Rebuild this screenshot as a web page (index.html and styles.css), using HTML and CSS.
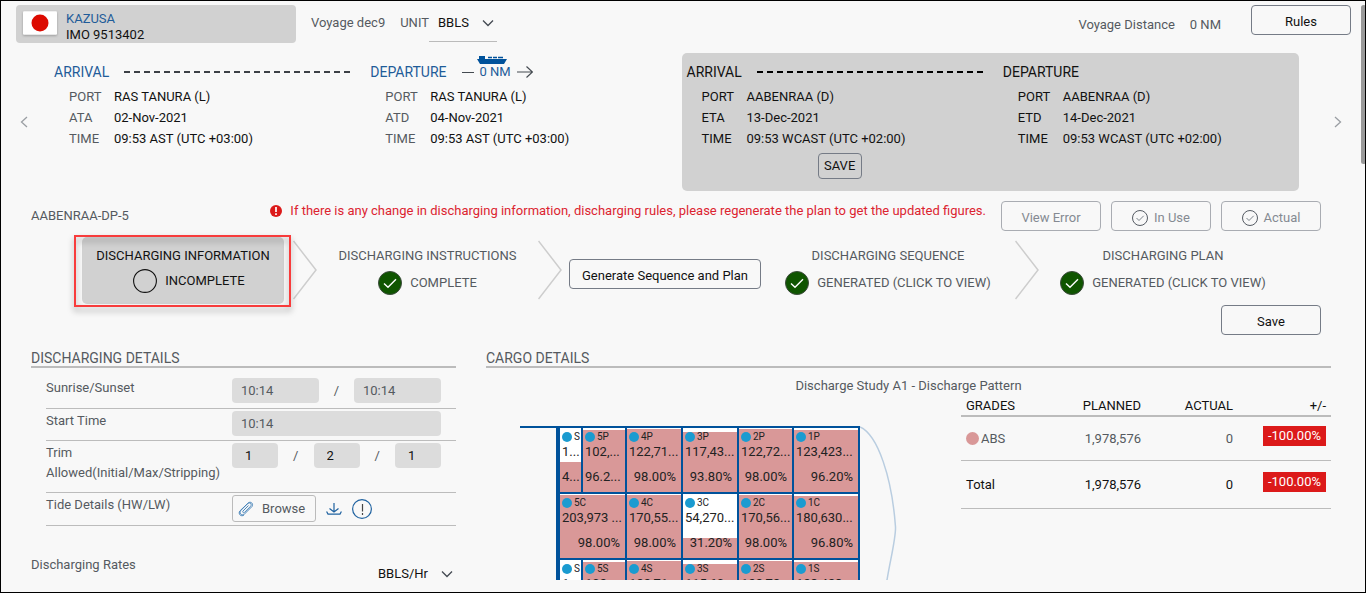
FILE: index.html
```html
<!DOCTYPE html>
<html lang="en">
<head>
<meta charset="utf-8">
<title>Discharging Information</title>
<link rel="stylesheet" href="styles.css">
</head>
<body>
<svg class="defs" aria-hidden="true">
  <symbol id="down" viewBox="0 0 12 8"><path d="M1 1.5l5 5 5-5" fill="none" stroke="#444a52" stroke-width="1.3"/></symbol>
  <symbol id="chevron" viewBox="0 0 24 60"><path d="M0.5 1L23 30 0.5 59" fill="none" stroke="#cdcdcd" stroke-width="1.5"/></symbol>
  <symbol id="done" viewBox="0 0 24 24"><circle cx="12" cy="12" r="11.5" fill="#0f5500" stroke="#3c4a3c"/><path d="M6 12.5l4 3.8 8-8" fill="none" stroke="#fff" stroke-width="1.4"/></symbol>
  <symbol id="tick" viewBox="0 0 16 16"><circle cx="8" cy="8" r="7.5" fill="none" stroke="#555b63"/><path d="M4.5 8l2.5 2.5 4.700-4.700" fill="none" stroke="#6c757d" stroke-width="0.9"/></symbol>
</svg>
<div class="page">
<div class="content">
  <header class="top">
    <div class="vessel">
      <svg class="flag" viewBox="0 0 32 22" aria-label="Japan"><rect width="32" height="22" rx="1" fill="#fff"/><circle cx="16" cy="11" r="8" fill="#dc0a00"/></svg>
      <div><a class="vessel-name" href="#">KAZUSA</a><div>IMO 9513402</div></div>
    </div>
    <span>Voyage dec9</span>
    <div class="unit"><label for="unit">UNIT</label>
      <span class="select unit-select"><select id="unit"><option>BBLS</option></select><svg><use href="#down"/></svg></span>
    </div>
    <div class="distance"><span>Voyage Distance</span><span>0 NM</span></div>
    <button class="btn">Rules</button>
  </header>

  <section class="ports">
    <button class="nav" aria-label="Previous"><svg viewBox="0 0 8 12"><path d="M7 1L1.500 6 7 11" fill="none" stroke="#9a9ea3" stroke-width="1.300"/></svg></button>
    <article class="port">
      <div class="leg">
        <div class="leg-head"><h3>ARRIVAL</h3><span class="dashes"></span></div>
        <dl><dt>PORT</dt><dd>RAS TANURA (L)</dd><dt>ATA</dt><dd>02-Nov-2021</dd><dt>TIME</dt><dd>09:53 AST (UTC +03:00)</dd></dl>
      </div>
      <div class="leg">
        <div class="leg-head"><h3>DEPARTURE</h3>
          <div class="sail"><span class="line"></span>
            <span class="nm">0 NM<svg class="ship" viewBox="0 0 30 8"><path d="M2 0h6v3h22l-3 5H3L0 3h2z" fill="#00529b"/><path d="M11 1.500h4M16 1.500h4M21 1.500h5" stroke="#00529b" stroke-width="1.500"/></svg></span>
            <svg class="arrow" viewBox="0 0 16 12"><path d="M0 6h15M9.500 0.500l6 5.500-6 5.500" fill="none" stroke="#444a50" stroke-width="1.200"/></svg>
          </div></div>
        <dl><dt>PORT</dt><dd>RAS TANURA (L)</dd><dt>ATD</dt><dd>04-Nov-2021</dd><dt>TIME</dt><dd>09:53 AST (UTC +03:00)</dd></dl>
      </div>
    </article>
    <article class="port current">
      <div class="leg">
        <div class="leg-head"><h3>ARRIVAL</h3><span class="dashes"></span></div>
        <dl><dt>PORT</dt><dd>AABENRAA (D)</dd><dt>ETA</dt><dd>13-Dec-2021</dd><dt>TIME</dt><dd>09:53 WCAST (UTC +02:00)</dd></dl>
        <div class="save-port"><button class="btn-small">SAVE</button></div>
      </div>
      <div class="leg">
        <div class="leg-head"><h3>DEPARTURE</h3></div>
        <dl><dt>PORT</dt><dd>AABENRAA (D)</dd><dt>ETD</dt><dd>14-Dec-2021</dd><dt>TIME</dt><dd>09:53 WCAST (UTC +02:00)</dd></dl>
      </div>
    </article>
    <button class="nav" aria-label="Next"><svg viewBox="0 0 8 12"><path d="M1 1l5.500 5L1 11" fill="none" stroke="#9a9ea3" stroke-width="1.300"/></svg></button>
  </section>

  <section class="plan-bar">
    <span class="plan-name">AABENRAA-DP-5</span>
    <p class="warning"><svg viewBox="0 0 12 12"><circle cx="6" cy="6" r="6" fill="#dc1a1a"/><path d="M6 2v5M6 8.300v1.700" stroke="#fff" stroke-width="1.700"/></svg>If there is any change in discharging information, discharging rules, please regenerate the plan to get the updated figures.</p>
    <div class="plan-actions">
      <button class="btn muted" disabled>View Error</button>
      <button class="btn muted" disabled><svg><use href="#tick"/></svg>In Use</button>
      <button class="btn muted" disabled><svg><use href="#tick"/></svg>Actual</button>
    </div>
  </section>

  <nav class="steps">
    <a class="step active" href="#"><span>DISCHARGING INFORMATION</span><span class="state"><svg viewBox="0 0 24 24"><circle cx="12" cy="12" r="11.400" fill="none" stroke="#111" stroke-width="1.100"/></svg>INCOMPLETE</span></a>
    <svg class="chev"><use href="#chevron"/></svg>
    <a class="step" href="#"><span>DISCHARGING INSTRUCTIONS</span><span class="state"><svg><use href="#done"/></svg>COMPLETE</span></a>
    <svg class="chev"><use href="#chevron"/></svg>
    <button class="btn generate">Generate Sequence and Plan</button>
    <a class="step" href="#"><span>DISCHARGING SEQUENCE</span><span class="state"><svg><use href="#done"/></svg>GENERATED (CLICK TO VIEW)</span></a>
    <svg class="chev"><use href="#chevron"/></svg>
    <a class="step" href="#"><span>DISCHARGING PLAN</span><span class="state"><svg><use href="#done"/></svg>GENERATED (CLICK TO VIEW)</span></a>
  </nav>
  <div class="save-row"><button class="btn">Save</button></div>

  <main class="panels">
    <section class="details">
      <h2>DISCHARGING DETAILS</h2>
      <div class="fields">
        <div class="field first"><label for="sunrise">Sunrise/Sunset</label><div class="controls"><input class="time" id="sunrise" value="10:14"><span>/</span><input class="time" aria-label="Sunset" value="10:14"></div></div>
        <div class="field"><label for="start">Start Time</label><div class="controls"><input class="time wide" id="start" value="10:14"></div></div>
        <div class="field trim"><label for="trim">Trim Allowed(Initial/Max/Stripping)</label><div class="controls"><input class="num" id="trim" value="1"><span>/</span><input class="num" aria-label="Max trim" value="2"><span>/</span><input class="num" aria-label="Stripping trim" value="1"></div></div>
        <div class="field"><span>Tide Details (HW/LW)</span><div class="files">
          <button class="browse"><svg viewBox="0 0 16 16"><path d="M10.500 4.500L5 10c-1 1 .5 2.400 1.500 1.400l6-6.100c2-2-.8-4.600-2.800-2.700L3 9.300c-2.600 2.600 1 6.200 3.600 3.600L14 5.500M14 5.500c1.800-2.500-1-5.700-3.800-3.500L2 9.800c-2.500 3 1.200 6.500 4 4.200" fill="none" stroke="#4a86bb" stroke-width="1"/></svg>Browse</button>
          <button class="icon" aria-label="Download"><svg viewBox="0 0 16 12"><path d="M8 0v9M3.500 5.500L8 9l4.500-3.500M.6 8.500l1.400 2.600h12l1.400-2.600" fill="none" stroke="#1f62a0" stroke-width="1.200"/></svg></button>
          <button class="icon info" aria-label="Information"><svg viewBox="0 0 20 20"><circle cx="10" cy="10" r="9.400" fill="none" stroke="#1f62a0" stroke-width="1.200"/><path d="M10.500 5v7.500M10.500 14v2" stroke="#444" stroke-width="1.200"/></svg></button>
        </div></div>
      </div>
      <div class="rates"><label for="rate">Discharging Rates</label><span class="select rate-select"><select id="rate"><option>BBLS/Hr</option></select><svg><use href="#down"/></svg></span></div>
    </section>

    <section class="cargo">
      <h2>CARGO DETAILS</h2>
      <p class="study">Discharge Study A1 - Discharge Pattern</p>
      <div class="cargo-body">
        <div class="hull">
          <div class="tanks">
            <div class="tank slop" style="--fill:47%"><b>S</b><i>1...</i><em>4...</em></div>
            <div class="tank" style="--fill:96.2%"><b>5P</b><i>102,...</i><em>96.2...</em></div>
            <div class="tank" style="--fill:98%"><b>4P</b><i>122,71...</i><em>98.00%</em></div>
            <div class="tank" style="--fill:93.8%"><b>3P</b><i>117,43...</i><em>93.80%</em></div>
            <div class="tank" style="--fill:98%"><b>2P</b><i>122,72...</i><em>98.00%</em></div>
            <div class="tank" style="--fill:96.2%"><b>1P</b><i>123,423...</i><em>96.20%</em></div>
            <div class="tank double" style="--fill:98%"><b>5C</b><i>203,973 ...</i><em>98.00%</em></div>
            <div class="tank" style="--fill:98%"><b>4C</b><i>170,55...</i><em>98.00%</em></div>
            <div class="tank" style="--fill:31.2%"><b>3C</b><i>54,270...</i><em>31.20%</em></div>
            <div class="tank" style="--fill:98%"><b>2C</b><i>170,56...</i><em>98.00%</em></div>
            <div class="tank" style="--fill:96.8%"><b>1C</b><i>180,630...</i><em>96.80%</em></div>
            <div class="tank slop" style="--fill:47%"><b>S</b><i>1...</i></div>
            <div class="tank" style="--fill:96.2%"><b>5S</b><i>102,...</i></div>
            <div class="tank" style="--fill:98%"><b>4S</b><i>122,71...</i></div>
            <div class="tank" style="--fill:93.8%"><b>3S</b><i>115,60...</i></div>
            <div class="tank" style="--fill:98%"><b>2S</b><i>122,72...</i></div>
            <div class="tank" style="--fill:96.2%"><b>1S</b><i>123,423...</i></div>
          </div>
          <svg class="bow" viewBox="0 0 38 202"><path d="M0 1C18 9 32 52 35.500 101C36 112 30 135 27 154C22 176 12 194 0 201" fill="none" stroke="#b9cde0" stroke-width="1.500"/></svg>
        </div>
        <table class="grades">
          <thead><tr><th>GRADES</th><th>PLANNED</th><th>ACTUAL</th><th>+/-</th></tr></thead>
          <tbody>
            <tr><td><span class="grade">ABS</span></td><td>1,978,576</td><td>0</td><td><span class="diff">-100.00%</span></td></tr>
            <tr class="total"><td>Total</td><td>1,978,576</td><td>0</td><td><span class="diff">-100.00%</span></td></tr>
          </tbody>
        </table>
      </div>
    </section>
  </main>
</div>
<div class="thumb"></div>
</div>
</body>
</html>
```
FILE: styles.css
```css
* { box-sizing: border-box; }
body { margin: 0; background: #f8f8f8; color: #555a60; font: 13px/20px Roboto, "Liberation Sans", sans-serif; }
h2, h3, p, dl, dd { margin: 0; font-weight: 400; }
button, select, input { font: inherit; color: inherit; margin: 0; }
button { cursor: pointer; }
a { color: inherit; text-decoration: none; }
.defs { display: none; }
.page { position: relative; height: 100vh; border: 1px solid #000; overflow: hidden; }
.content { height: calc(100vh - 14px); overflow: hidden; }
.thumb { position: absolute; top: 4px; right: -1px; width: 5px; height: 159px; border-radius: 3px; background: #999; }

.btn { height: 30px; min-width: 100px; border: 1px solid #757b86; border-radius: 4px; background: transparent; color: #111; display: inline-flex; align-items: center; justify-content: center; gap: 6px; padding: 3px 12px 0; }
.btn.muted { border-color: #a9acb2; color: #858a92; }
.btn.muted svg { width: 16px; height: 16px; }

.top { display: flex; align-items: flex-start; padding: 4px 14px 0 15px; line-height: 16px; }
.top > span { padding: 10px 0 0 15px; }
.vessel { display: flex; gap: 9px; width: 280px; height: 38px; padding: 6px 7px; border-radius: 4px; background: #d1d1d1; color: #111; }
.flag { width: 34px; height: 24px; filter: drop-shadow(0 1px 1px #999); }
.vessel-name { color: #1f5c99; }
.unit { display: flex; margin-left: 15px; }
.unit label { padding-top: 10px; }
.select { position: relative; display: inline-block; }
.select select { appearance: none; width: 100%; border: 0; background: transparent; color: #111; padding: 0; outline: 0; }
.select svg { position: absolute; right: 3px; top: 14px; width: 12px; height: 8px; pointer-events: none; }
.unit-select { width: 68px; height: 37px; border-bottom: 1px solid #bbb; }
.unit-select select { height: 35px; padding-left: 9px; }
.distance { display: flex; gap: 15px; margin-left: auto; padding: 12px 30px 0 0; }

.ports { display: flex; gap: 15px; padding: 10px 23px 0 19px; align-items: stretch; }
.nav { width: 15px; flex: none; border: 0; padding: 0; background: none; text-align: left; margin-right: -1px; }
.nav:last-child { margin: 0 0 0 20px; width: 8px; }
.nav svg { width: 8px; height: 12px; display: block; }
.port { flex: 1; display: grid; grid-template-columns: 1fr 1fr; gap: 20px; height: 138px; padding: 9px 0 0 5px; border-radius: 5px; color: #111; }
.port.current { background: #d1d1d1; }
.leg-head { display: flex; align-items: center; gap: 15px; }
.leg-head h3 { font-size: 14px; color: #1f5c99; }
.current .leg-head h3 { color: #111; }
.dashes { flex: 1; height: 2px; background: repeating-linear-gradient(90deg, #3c4046 0 6px, transparent 6px 10px); }
.current .dashes { background: repeating-linear-gradient(90deg, #000 0 6px, transparent 6px 10px); }
.sail { display: flex; align-items: center; gap: 6px; color: #1f5c99; }
.line { width: 12px; height: 1px; background: #444a50; }
.nm { position: relative; }
.ship { position: absolute; left: 50%; top: -6px; margin-left: -18px; width: 30px; height: 8px; }
.arrow { width: 16px; height: 12px; }
.leg dl { display: grid; grid-template-columns: 45px 1fr; row-gap: 1px; padding: 5px 0 0 15px; }
.port dt { color: #555a60; }
.port.current dt { color: #111; }
.save-port { padding: 4px 5px 0 15px; text-align: center; }
.btn-small { height: 26px; width: 44px; padding: 0; border: 1px solid #757b86; border-radius: 4px; background: none; color: #111; }

.plan-bar { display: flex; align-items: flex-start; padding: 10px 44px 0 30px; }
.plan-name { padding-top: 5px; }
.warning { flex: 1; display: flex; align-items: center; justify-content: flex-end; gap: 8px; color: #dc2430; padding-right: 15px; }
.warning svg { width: 12px; height: 12px; }
.plan-actions { display: flex; gap: 10px; }

.steps { display: grid; grid-template-columns: minmax(0, 202fr) 33px minmax(0, 221fr) 31px 192px minmax(0, 254fr) 24px minmax(0, 248fr); padding: 6px 78px 0 81px; align-items: start; }
.step { display: flex; flex-direction: column; align-items: center; gap: 5px; padding-top: 9px; white-space: nowrap; }
.state { display: flex; align-items: center; gap: 8px; }
.state svg { width: 24px; height: 24px; }
.chev { width: 24px; height: 60px; margin-top: 3px; }
.step.active { position: relative; height: 67px; background: #d1d1d1; border-radius: 5px; color: #111; gap: 3px; }
.step.active .state { padding-left: 12px; }
.step.active::after { content: ""; position: absolute; inset: -2px -7px -3px -8px; border: 2px solid #f83c3c; filter: drop-shadow(0 4px 3px rgba(0, 0, 0, 0.35)); }
.step.active + .chev { margin-left: 9px; }
.generate { margin-top: 22px; padding: 3px 0 0; }
.save-row { display: flex; justify-content: flex-end; padding: 1px 44px 0 0; }

.panels { display: grid; grid-template-columns: minmax(0, 425fr) minmax(0, 845fr); gap: 30px; padding: 13px 34px 0 30px; }
h2 { font-size: 14px; line-height: 15px; padding-top: 3px; border-bottom: 2px solid #bcbcbc; }
.fields { padding-left: 15px; }
.field { display: grid; grid-template-columns: 186px 1fr; border-bottom: 1px solid #bcbcbc; padding: 2px 15px 4px 0; align-items: start; }
.field.first { padding: 10px 15px 5px 0; }
.field.trim { padding-bottom: 9px; }
.controls { display: flex; justify-content: space-between; align-items: center; height: 25px; }
.controls input { width: 87px; height: 25px; border: 0; border-radius: 4px; background: #dcdcdc; padding: 0 9px; }
.controls input.wide { width: 100%; }
.controls input.num { width: 46px; padding: 0 13px; color: #111; }
.files { display: flex; align-items: center; gap: 10px; height: 27px; margin-bottom: -1px; }
.browse { width: 84px; height: 27px; border: 1px solid #bbb; border-radius: 3px; background: none; padding: 0 5px; display: flex; align-items: center; gap: 8px; }
.browse svg { width: 16px; height: 16px; }
.icon { border: 0; padding: 0; background: none; display: flex; }
.icon svg { width: 16px; height: 12px; }
.icon.info svg { width: 20px; height: 20px; }
.rates { display: flex; justify-content: space-between; padding-top: 29px; }
.rate-select { width: 78px; margin-top: 9px; }
.rate-select select { height: 20px; }
.rate-select svg { top: 6px; }

.study { text-align: center; padding-top: 8px; }
.cargo-body { display: flex; justify-content: space-between; padding-left: 34px; }
.hull { display: flex; align-items: flex-start; margin-top: 30px; }
.hull::before { content: ""; width: 36px; height: 2px; background: #00529b; }
.tanks { display: grid; grid-template-columns: 21px 42px 54px 54px 53px 64px; grid-auto-rows: 64px; gap: 2px; padding: 2px 2px 2px 4px; background: #00529b; color: #222; }
.tank { overflow: hidden; padding: 0 2px; white-space: nowrap; background: linear-gradient(to top, #d99898 var(--fill), #fff var(--fill)); }
.tank.double { grid-column: span 2; }
.tank b, .tank i, .tank em { display: block; font-weight: 400; font-style: normal; line-height: 14px; }
.tank b { display: flex; align-items: center; gap: 2px; font-size: 10px; line-height: 18px; }
.tank b::before { content: ""; flex: none; width: 10px; height: 10px; border-radius: 50%; background: #1b9bd0; }
.tank i { line-height: 12px; }
.tank em { text-align: right; padding: 12px 3px 0 0; }
.bow { width: 38px; height: 202px; }
.grades { width: 370px; border-collapse: collapse; align-self: flex-start; table-layout: fixed; }
.grades th, .grades td { font-weight: 400; text-align: right; padding: 0 5px 0 0; border-bottom: 1px solid #bcbcbc; }
.grades td { height: 44px; padding-top: 1px; }
.grades th { height: 20px; line-height: 18px; color: #111; border-bottom: 2px solid #bcbcbc; }
.grades th:first-child, .grades td:first-child { text-align: left; padding-left: 5px; width: 100px; }
.grades th:nth-child(2) { width: 85px; }
.grades th:nth-child(3) { width: 92px; }
.grades .total td { color: #111; height: 48px; }
.grade { display: flex; align-items: center; gap: 2px; }
.grade::before { content: ""; width: 13px; height: 13px; border-radius: 50%; background: #d99898; }
.grades td .diff { display: inline-block; background: #dc1a1a; color: #fff; padding: 0 5px; margin-bottom: 6px; }
```
